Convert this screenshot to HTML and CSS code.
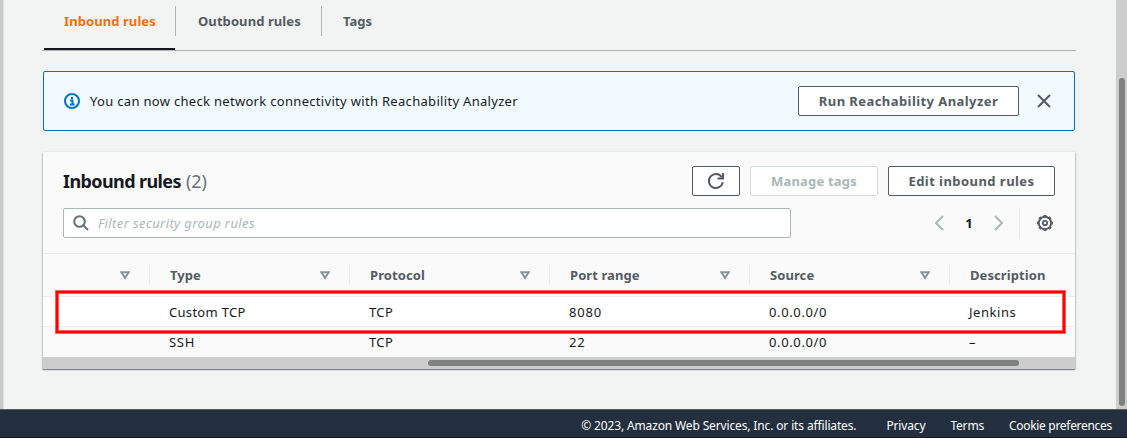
FILE: index.html
```html
<!DOCTYPE html>
<html lang="en">
<head>
<meta charset="utf-8">
<title>Inbound rules</title>
<link rel="stylesheet" href="styles.css">
</head>
<body>
<div class="viewport">
  <main class="content">
    <nav class="tabs">
      <a class="tab tab-active"><span class="t-inbound">Inbound rules</span></a>
      <a class="tab tab-second"><span class="t-outbound">Outbound rules</span></a>
      <a class="tab"><span class="t-tags">Tags</span></a>
    </nav>
    <section class="banner">
      <svg class="icon-info" width="16" height="16" viewBox="0 0 16 16" fill="none" stroke="#0073bb" stroke-width="2"><circle cx="8" cy="8" r="7"/><path d="M6 7.500h2.500V11M6 11.500h4.500"/><path d="M7 5h2"/></svg>
      <p class="banner-text"><span class="t-banner">You can now check network connectivity with Reachability Analyzer</span></p>
      <button class="btn btn-run"><span class="t-run">Run Reachability Analyzer</span></button>
      <svg class="icon-close" width="14" height="14" viewBox="0 0 14 14" fill="none" stroke="#545b64" stroke-width="2"><path d="M1 1l12 12M13 1L1 13"/></svg>
    </section>
    <section class="panel">
      <header class="panel-head">
        <div class="title-row">
          <h2 class="title"><span class="t-title">Inbound rules</span><span class="count">(2)</span></h2>
          <button class="btn btn-refresh"><svg width="18" height="18" viewBox="0 0 18 18" fill="none" stroke="#545b64" stroke-width="2"><path d="M15.800 10.200A7 7 0 1 1 14.800 5.200"/><path d="M16 1v5.500h-5.500"/></svg></button>
          <button class="btn btn-manage"><span class="t-manage">Manage tags</span></button>
          <button class="btn btn-edit"><span class="t-edit">Edit inbound rules</span></button>
        </div>
        <div class="filter-row">
          <div class="filter">
            <svg width="16" height="16" viewBox="0 0 16 16" fill="none" stroke="#687078" stroke-width="2"><circle cx="6.500" cy="6.500" r="5.300"/><path d="M10.500 10.500L15 15"/></svg>
            <span class="t-filter">Filter security group rules</span>
          </div>
          <div class="pager">
            <svg width="10" height="16" viewBox="0 0 10 16" fill="none" stroke="#aab7b8" stroke-width="2"><path d="M9 1L2 8l7 7"/></svg>
            <b class="page-number">1</b>
            <svg width="10" height="16" viewBox="0 0 10 16" fill="none" stroke="#aab7b8" stroke-width="2"><path d="M1 1l7 7-7 7"/></svg>
          </div>
          <div class="settings"><svg width="18" height="18" viewBox="0 0 18 18" fill="none" stroke="#545b64"><circle cx="9" cy="9" r="6.200" stroke-width="1.900"/><circle cx="9" cy="9" r="7.300" stroke-width="1.500" pathLength="80" stroke-dasharray="5 5" stroke-dashoffset="2.500"/><circle cx="9" cy="9" r="2.200" stroke-width="1.800"/></svg></div>
        </div>
      </header>
      <div class="grid-row grid-head">
        <div class="th"><svg class="sort" width="10" height="9" viewBox="0 0 10 9"><path d="M1.300 1.200h7.400L5 7z"/></svg></div>
        <div class="th"><span class="t-type">Type</span><svg class="sort" width="10" height="9" viewBox="0 0 10 9"><path d="M1.300 1.200h7.400L5 7z"/></svg></div>
        <div class="th"><span class="t-protocol">Protocol</span><svg class="sort" width="10" height="9" viewBox="0 0 10 9"><path d="M1.300 1.200h7.400L5 7z"/></svg></div>
        <div class="th"><span class="t-port">Port range</span><svg class="sort" width="10" height="9" viewBox="0 0 10 9"><path d="M1.300 1.200h7.400L5 7z"/></svg></div>
        <div class="th"><span class="t-source">Source</span><svg class="sort" width="10" height="9" viewBox="0 0 10 9"><path d="M1.300 1.200h7.400L5 7z"/></svg></div>
        <div class="th th-last"><span class="t-desc">Description</span></div>
      </div>
      <div class="grid-row data-row data-first">
        <div class="td"></div><div class="td"><span class="t-custom">Custom TCP</span></div><div class="td"><span class="t-tcp">TCP</span></div><div class="td"><span class="t-number">8080</span></div><div class="td"><span class="t-ip">0.0.0.0/0</span></div><div class="td"><span class="t-jenkins">Jenkins</span></div>
      </div>
      <div class="grid-row data-row">
        <div class="td"></div><div class="td"><span class="t-ssh">SSH</span></div><div class="td"><span class="t-tcp">TCP</span></div><div class="td"><span class="t-number">22</span></div><div class="td"><span class="t-ip">0.0.0.0/0</span></div><div class="td">–</div>
      </div>
      <div class="hscroll"><div class="hthumb"></div></div>
      <div class="highlight"></div>
    </section>
  </main>
  <div class="vscroll"><div class="vthumb"></div></div>
</div>
<footer class="footer">
  <span class="t-copy">© 2023, Amazon Web Services, Inc. or its affiliates.</span>
  <a class="t-privacy">Privacy</a>
  <a class="t-terms">Terms</a>
  <a class="t-cookie">Cookie preferences</a>
</footer>
</body>
</html>
```
FILE: styles.css
```css
* { box-sizing: border-box; }
body {
  margin: 0;
  width: 1127px;
  height: 438px;
  overflow: hidden;
  background: #f2f3f3;
  color: #16191f;
  font-family: "Noto Sans", "Open Sans", sans-serif;
  font-size: 13px;
  line-height: 20px;
}
svg { display: block; flex: none; }
span, a, b { white-space: nowrap; }
.viewport {
  display: flex;
  height: 409px;
  border-left: 3px solid #c8cacb;
  box-shadow: inset 1px 0 #dfe2e3;
}
.content { flex: 1; padding-left: 40px; }

.tabs {
  display: flex;
  width: 1034px;
  height: 51px;
  margin-left: -1px;
  border-bottom: 1px solid #aab7b8;
}
.tab {
  display: flex;
  align-items: flex-start;
  height: 50px;
  padding: 11px 21px 0;
  color: #545b64;
  font-weight: 700;
  background: linear-gradient(#aab7b8, #aab7b8) right 6px / 1px 30px no-repeat;
}
.tab:last-child { background: none; }
.tab-active {
  position: relative;
  width: 134px;
  padding-left: 22px;
  color: #ec7211;
}
.tab-active::after {
  content: "";
  position: absolute;
  left: 2px;
  right: 1px;
  bottom: 0;
  height: 2px;
  background: #16191f;
}
.tab-second { width: 146px; padding-left: 22px; }
.t-inbound, .t-outbound { letter-spacing: .08px; }

.banner {
  display: flex;
  align-items: center;
  width: 1032px;
  height: 60px;
  margin-top: 20px;
  padding: 0 23px 0 20px;
  border: 1px solid #0073bb;
  border-radius: 2px;
  background: #f1faff;
}
.banner-text { flex: 1; margin: 0 0 0 10px; }
.t-banner { letter-spacing: .31px; }
.icon-close { margin-left: 18px; }

.btn {
  display: flex;
  align-items: center;
  justify-content: center;
  height: 30px;
  padding: 0;
  border: 1px solid #545b64;
  border-radius: 2px;
  background: #fff;
  color: #545b64;
  font: 700 13px/20px "Noto Sans", "Open Sans", sans-serif;
}
.btn-run { width: 221px; letter-spacing: .43px; }
.btn-refresh { width: 48px; }
.btn-manage { width: 128px; margin-left: 10px; border-color: #d5dbdb; color: #aab7b8; letter-spacing: .2px; }
.btn-edit { width: 167px; margin-left: 10px; letter-spacing: .45px; }

.panel {
  position: relative;
  width: 1032px;
  height: 217px;
  margin-top: 21px;
  background: #fafafa;
  box-shadow: 0 -1px #e9ebeb, 0 1px 1px rgba(0, 28, 36, .3), 1px 1px 1px rgba(0, 28, 36, .15), -1px 1px 1px rgba(0, 28, 36, .15);
}
.panel-head {
  height: 102px;
  padding: 14px 20px 0;
  border-bottom: 1px solid #eaeded;
}
.title-row { display: flex; align-items: center; height: 30px; }
.title { flex: 1; margin: 0; font-size: 18px; line-height: 22px; }
.t-title { letter-spacing: -.6px; }
.count { margin-left: 5px; color: #687078; font-weight: 400; }
.filter-row { display: flex; align-items: center; margin-top: 12px; }
.filter {
  display: flex;
  align-items: center;
  gap: 9px;
  width: 728px;
  height: 30px;
  padding-left: 9px;
  border: 1px solid #aab7b8;
  border-radius: 2px;
  background: #fff;
  color: #aab7b8;
  font-style: italic;
  letter-spacing: .39px;
}
.pager { display: flex; align-items: center; justify-content: space-between; width: 70px; margin-left: 143px; }
.settings {
  display: flex;
  align-items: center;
  height: 30px;
  margin-left: 15px;
  padding-left: 16px;
  border-left: 1px solid #eaeded;
}

.grid-row { display: grid; grid-template-columns: 107px repeat(4, 200px) 125px; }
.grid-head { height: 42px; color: #545b64; font-weight: 700; }
.th {
  display: flex;
  align-items: center;
  padding: 0 20px;
  background: linear-gradient(#eaeded, #eaeded) right 10px / 1px 21px no-repeat;
}
.th-last { background: none; }
.t-protocol, .t-port, .t-source, .t-desc { letter-spacing: .08px; }
.sort { margin-left: auto; fill: none; stroke: #879596; stroke-width: 2; }
.data-row { height: 30px; border-top: 1px solid #eaeded; }
.data-first { background: #fff; }
.td { padding: 5px 19px 0; }
.t-custom { letter-spacing: .3px; }
.t-tcp { letter-spacing: .4px; }
.t-ssh { letter-spacing: .7px; }
.t-number { letter-spacing: .8px; }
.t-ip { letter-spacing: .62px; }
.t-jenkins { letter-spacing: .55px; }
.hscroll { height: 12px; margin-top: 1px; padding: 3px 0 0 385px; background: #cdcdcd; }
.hthumb { width: 591px; height: 6px; border-radius: 3px; background: #7d8180; }
.highlight {
  position: absolute;
  left: 13px;
  top: 139px;
  width: 1009px;
  height: 42px;
  border: 2px solid #f00;
  box-shadow: 0 0 0 1px #ff5c5c, inset 0 0 0 1px #ff5c5c;
}

.vscroll { width: 11px; padding: 78px 0 0 3px; background: #cdcdcd; }
.vthumb { width: 6px; height: 328px; border-radius: 3px; background: #7d8180; }

.footer {
  display: flex;
  justify-content: flex-end;
  height: 29px;
  padding: 6px 15px 0 0;
  border-top: 1px solid #545b64;
  border-bottom: 1px solid #16191f;
  background: #232f3e;
  color: #fff;
  font-size: 12px;
  line-height: 19px;
}
.t-copy { letter-spacing: -.14px; }
.t-privacy { margin-left: 30px; letter-spacing: -.15px; }
.t-terms { margin-left: 25px; letter-spacing: -.2px; }
.t-cookie { margin-left: 25px; letter-spacing: -.3px; }
```
